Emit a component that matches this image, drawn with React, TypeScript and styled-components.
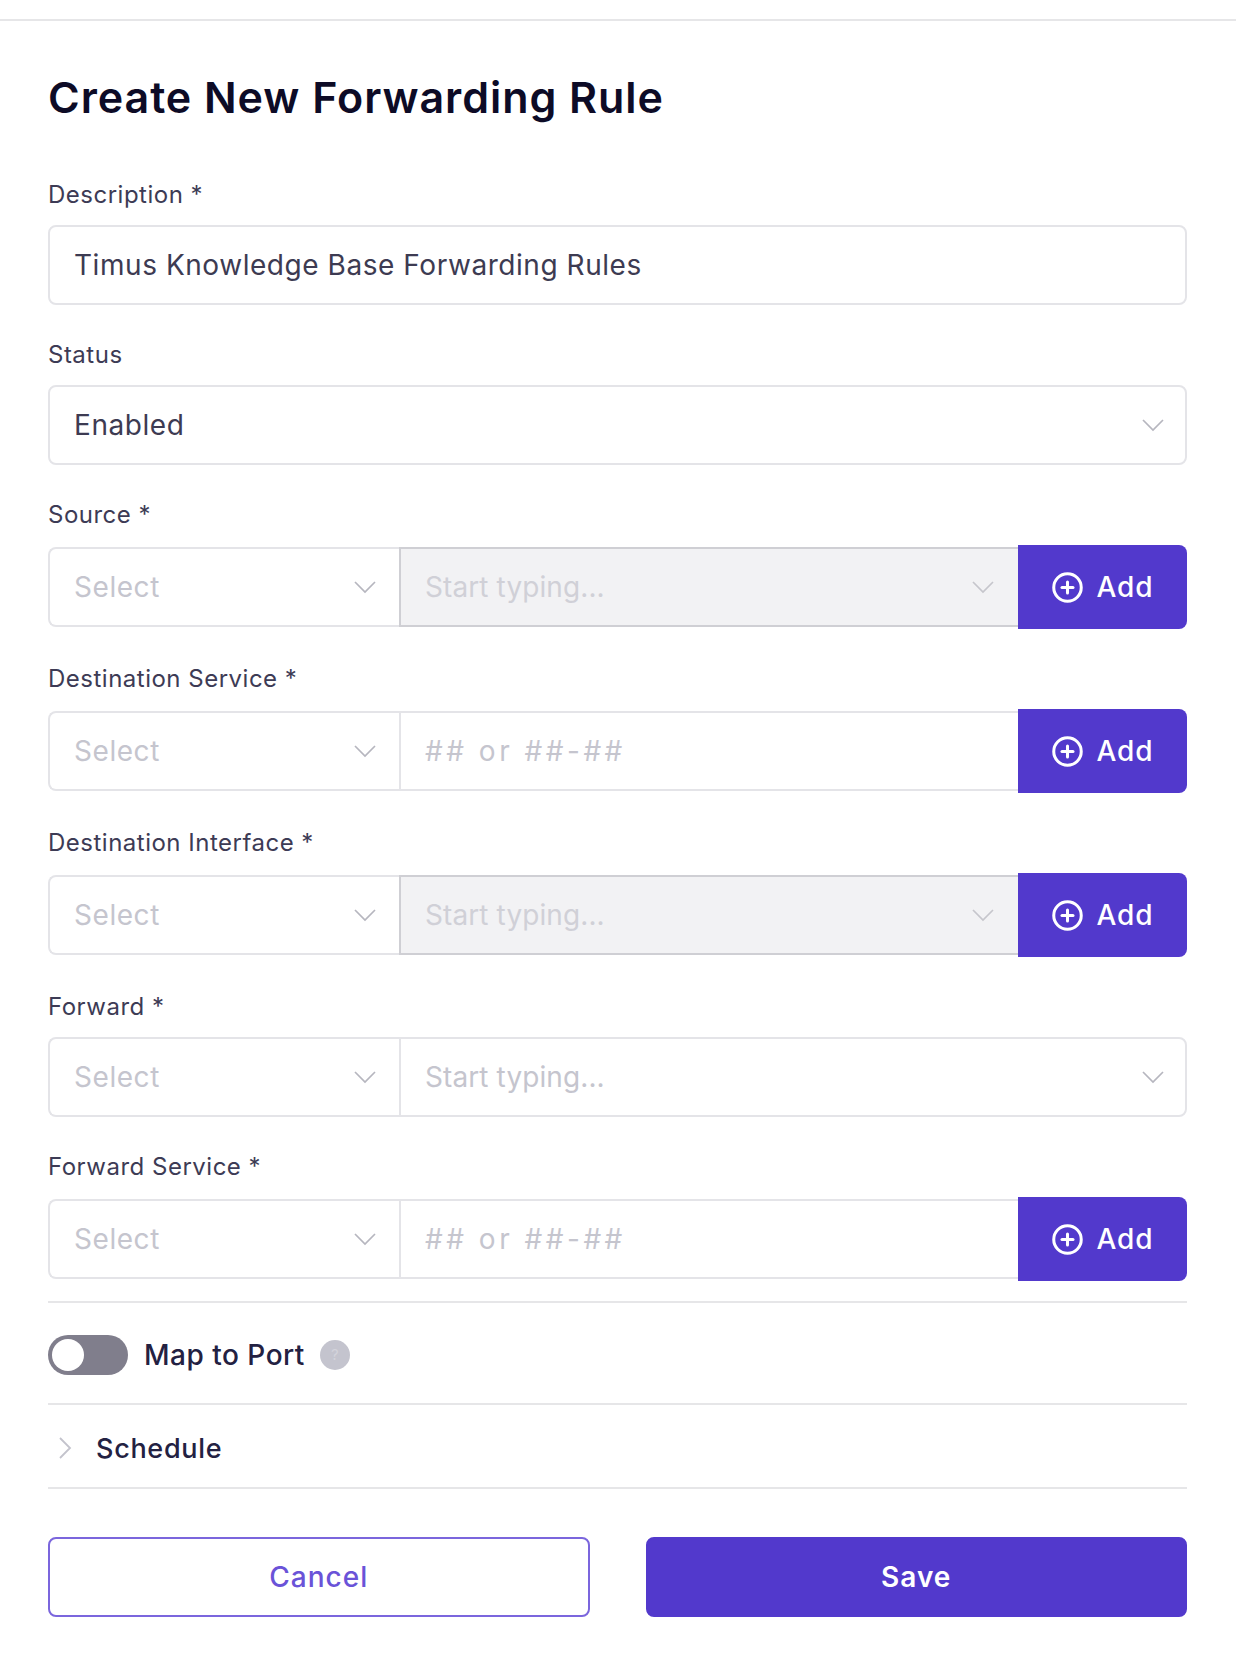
import React from "react";
import styled, { createGlobalStyle } from "styled-components";
import { CirclePlus } from "lucide-react";

const Global = createGlobalStyle`
  html, body { margin: 0; padding: 0; background: #fff; }
  body { font-family: Inter, "Liberation Sans", sans-serif; }
  * { box-sizing: border-box; }
`;

const TopRule = styled.div`
  height: 2px;
  margin-top: 19px;
  background: #e6e6e8;
`;

const Page = styled.main`
  width: 1236px;
  padding: 46px 49px 48px 48px;
`;

const Title = styled.h1`
  margin: 0 0 52px;
  height: 60px;
  line-height: 60px;
  font-size: 43px;
  font-weight: 600;
  letter-spacing: 0.95px;
  color: #0d0b26;
`;

const Field = styled.div`
  margin-bottom: 34px;
`;

const Label = styled.div`
  height: 30px;
  line-height: 32px;
  margin-bottom: 16px;
  font-size: 24px;
  letter-spacing: 0.5px;
  color: #3d3b55;
`;

const Box = styled.div`
  height: 80px;
  display: flex;
  align-items: center;
  justify-content: space-between;
  padding: 0 20px 0 24px;
  border: 2px solid #e4e4e8;
  border-radius: 8px;
  background: #fff;
  font-size: 28px;
  letter-spacing: 0.55px;
  color: #3d3b52;
`;

const Group = styled.div`
  display: grid;
  grid-template-columns: 351px 1fr auto;
  align-items: center;
`;

const GroupSelect = styled(Box)`
  padding-right: 22px;
  border-right: none;
  border-radius: 8px 0 0 8px;
  color: #c5c5ce;
`;

const GroupInput = styled(Box)<{ $disabled?: boolean; $end?: boolean }>`
  border-left: 2px solid ${(p) => (p.$disabled ? "#cfcfd4" : "#e4e4e8")};
  border-color: ${(p) => (p.$disabled ? "#cfcfd4" : "#e4e4e8")};
  border-right: ${(p) => (p.$end ? "2px solid #e4e4e8" : "none")};
  border-radius: ${(p) => (p.$end ? "0 8px 8px 0" : "0")};
  background: ${(p) => (p.$disabled ? "#f2f2f4" : "#fff")};
  padding-right: ${(p) => (p.$end ? "20px" : "23px")};
  color: ${(p) => (p.$disabled ? "#d0d0d7" : "#c5c5ce")};
`;

const Placeholder = styled.span<{ $wide?: boolean }>`
  letter-spacing: ${(p) => (p.$wide ? "3.5px" : "0.1px")};
`;

const AddButton = styled.button`
  width: 169px;
  height: 84px;
  display: flex;
  align-items: center;
  justify-content: center;
  gap: 12px;
  border: none;
  border-radius: 0 8px 8px 0;
  background: #5239cc;
  color: #fff;
  font-family: inherit;
  font-size: 28px;
  font-weight: 500;
  letter-spacing: 1px;
`;

const Chevron = styled.svg`
  width: 24px;
  height: 14px;
  flex: none;
  fill: none;
  stroke: ${(p) => p.color || "#b6b6bf"};
  stroke-width: 1.7;
`;

const Divider = styled.hr`
  margin: 0;
  height: 2px;
  border: none;
  background: #e6e6e8;
`;

const FirstDivider = styled(Divider)`
  margin-top: -14px;
`;

const ToggleRow = styled.div`
  height: 100px;
  padding-top: 3px;
  display: flex;
  align-items: center;
`;

const Toggle = styled.div`
  width: 80px;
  height: 40px;
  padding: 4px;
  border-radius: 20px;
  background: #807e8c;
`;

const Knob = styled.div`
  width: 32px;
  height: 32px;
  border-radius: 50%;
  background: #fff;
`;

const ToggleText = styled.span`
  margin-left: 16px;
  font-size: 28px;
  font-weight: 500;
  letter-spacing: 0.5px;
  color: #232142;
`;

const Help = styled.span`
  margin-left: 15px;
  width: 30px;
  height: 30px;
  display: flex;
  align-items: center;
  justify-content: center;
  border-radius: 50%;
  background: #c4c4ce;
  color: #d3d3db;
  font-size: 15px;
`;

const ScheduleRow = styled.div`
  height: 82px;
  padding: 4px 0 0 10px;
  display: flex;
  align-items: center;
`;

const Side = styled.svg`
  width: 14px;
  height: 24px;
  fill: none;
  stroke: #c3c3cc;
  stroke-width: 1.8;
`;

const ScheduleText = styled.span`
  margin-left: 24px;
  font-size: 27px;
  font-weight: 500;
  letter-spacing: 0.7px;
  color: #232142;
`;

const Actions = styled.div`
  display: grid;
  grid-template-columns: 1fr 1fr;
  gap: 56px;
  margin-top: 48px;
`;

const ActionButton = styled.button<{ $primary?: boolean }>`
  height: 80px;
  border-radius: 8px;
  border: 2px solid ${(p) => (p.$primary ? "#5239cc" : "#7b66dd")};
  background: ${(p) => (p.$primary ? "#5239cc" : "#fff")};
  color: ${(p) => (p.$primary ? "#fff" : "#6a53d8")};
  font-family: inherit;
  font-size: 28px;
  font-weight: ${(p) => (p.$primary ? 600 : 500)};
  letter-spacing: 1px;
`;

const Down = ({ color }: { color?: string }) => (
  <Chevron viewBox="0 0 24 14" color={color}>
    <polyline points="2,2 12,12 22,2" />
  </Chevron>
);

const Add = () => (
  <AddButton type="button">
    <CirclePlus size={33} strokeWidth={2.2} />
    Add
  </AddButton>
);

type Rule = {
  label: string;
  placeholder: string;
  disabled?: boolean;
  chevron?: boolean;
  add?: boolean;
  wide?: boolean;
};

const rules: Rule[] = [
  { label: "Source *", placeholder: "Start typing...", disabled: true, chevron: true, add: true },
  { label: "Destination Service *", placeholder: "## or ##-##", add: true, wide: true },
  { label: "Destination Interface *", placeholder: "Start typing...", disabled: true, chevron: true, add: true },
  { label: "Forward *", placeholder: "Start typing...", chevron: true },
  { label: "Forward Service *", placeholder: "## or ##-##", add: true, wide: true },
];

export default function App() {
  return (
    <>
      <Global />
      <TopRule />
      <Page>
        <Title>Create New Forwarding Rule</Title>
        <Field>
          <Label>Description *</Label>
          <Box>Timus Knowledge Base Forwarding Rules</Box>
        </Field>
        <Field>
          <Label>Status</Label>
          <Box>
            Enabled
            <Down />
          </Box>
        </Field>
        {rules.map((r) => (
          <Field key={r.label}>
            <Label>{r.label}</Label>
            <Group>
              <GroupSelect>
                Select
                <Down />
              </GroupSelect>
              <GroupInput $disabled={r.disabled} $end={!r.add}>
                <Placeholder $wide={r.wide}>{r.placeholder}</Placeholder>
                {r.chevron && <Down color={r.disabled ? "#c6c6cc" : undefined} />}
              </GroupInput>
              {r.add && <Add />}
            </Group>
          </Field>
        ))}
        <FirstDivider />
        <ToggleRow>
          <Toggle>
            <Knob />
          </Toggle>
          <ToggleText>Map to Port</ToggleText>
          <Help>?</Help>
        </ToggleRow>
        <Divider />
        <ScheduleRow>
          <Side viewBox="0 0 14 24">
            <polyline points="2,2 12,12 2,22" />
          </Side>
          <ScheduleText>Schedule</ScheduleText>
        </ScheduleRow>
        <Divider />
        <Actions>
          <ActionButton type="button">Cancel</ActionButton>
          <ActionButton type="button" $primary>
            Save
          </ActionButton>
        </Actions>
      </Page>
    </>
  );
}
